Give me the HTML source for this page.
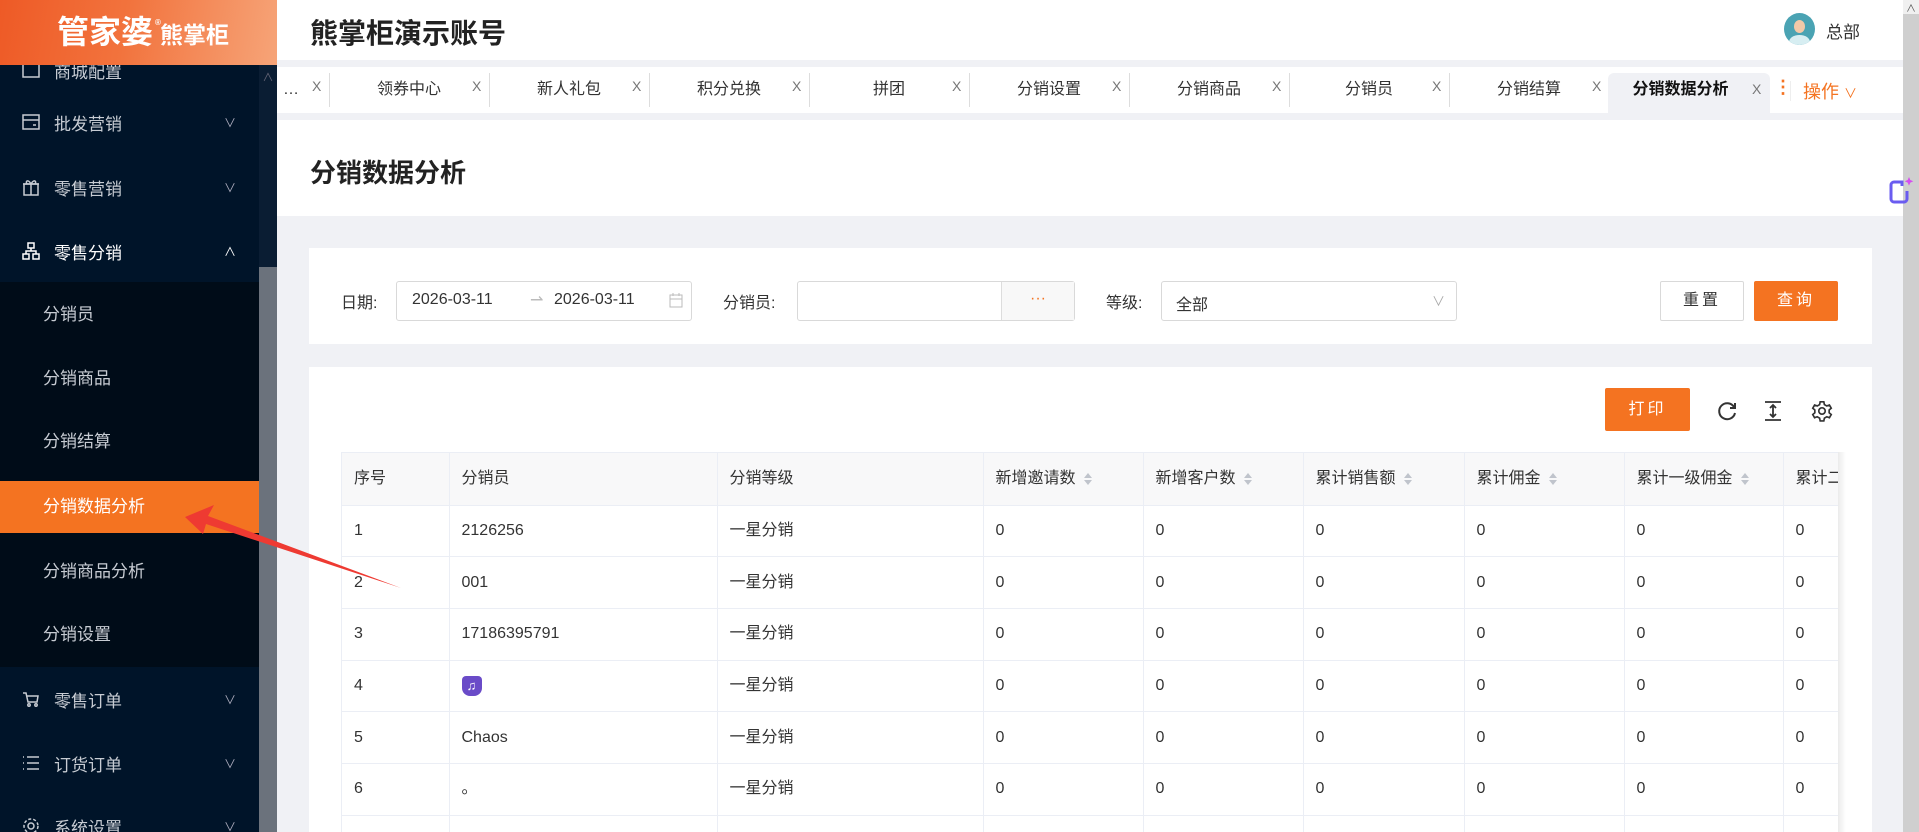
<!DOCTYPE html>
<html><head><meta charset="utf-8"><style>
*{margin:0;padding:0;box-sizing:border-box}
html,body{width:1919px;height:832px;overflow:hidden}
body{background:#f0f1f5;font-family:"Liberation Sans","Noto Sans CJK SC",sans-serif;position:relative;color:#333}
.abs{position:absolute}
#side{left:0;top:0;width:277px;height:832px;background:#001429}
#logo{left:0;top:0;width:277px;height:65px;background:linear-gradient(100deg,#ee5a26 0%,#f2733d 45%,#f6a478 100%);color:#fff;font-weight:bold;text-align:center;z-index:3}
.mi{position:absolute;left:0;width:259px;height:60px;color:#c7ccd3;font-size:17px;display:flex;align-items:center}
.mi .ic{position:absolute;left:22px;width:18px;height:18px}
.mi .tx{position:absolute;left:54px}
.mi .ch{position:absolute;left:224px;font-size:12px;color:#aab}
.sub{position:absolute;left:0;width:259px;height:52px;color:#c7ccd3;font-size:17px;line-height:52px;padding-left:43px}
.hdr{left:277px;top:0;width:1626px;height:60px;background:#fff}
.tabs{left:277px;top:67px;width:1626px;height:46px;background:#fff}
.tab{position:absolute;top:0;height:46px;width:160px;font-size:16px;color:#333;line-height:46px}
.tab .l{position:absolute;left:0;width:160px;text-align:center}
.tab .x{position:absolute;left:143px;color:#777;font-size:14px;top:-4px}
.tab .d{position:absolute;left:160px;top:6px;width:1px;height:34px;background:#ddd}
th,td{border-right:1px solid #ebeef5;border-bottom:1px solid #ebeef5;text-align:left;padding-left:12px;font-size:16px;font-weight:normal;color:#333;white-space:nowrap;overflow:hidden;line-height:20px;vertical-align:middle}
th{background:#f8f8f9;height:52px}
td{height:51.7px}
table{border-collapse:collapse;table-layout:fixed}
.sort{display:inline-block;vertical-align:middle;margin-left:8px;width:8px}
.sort:before{content:"";display:block;border:4px solid transparent;border-bottom:5px solid #c0c4cc;border-top:0;margin-bottom:2px}
.sort:after{content:"";display:block;border:4px solid transparent;border-top:5px solid #c0c4cc;border-bottom:0}
</style></head><body>
<div id="side" class="abs">
 <div class="mi" style="top:40px"><svg class="ic" viewBox="0 0 18 18" fill="none" stroke="#c7ccd3" stroke-width="1.5"><rect x="1" y="2" width="16" height="14"/></svg><span class="tx">商城配置</span></div>
 <div class="mi" style="top:92px"><svg class="ic" viewBox="0 0 18 18" fill="none" stroke="#c7ccd3" stroke-width="1.5"><rect x="1" y="2" width="16" height="14"/><path d="M1 7h16M11 12h3"/></svg><span class="tx">批发营销</span><span class="ch">∨</span></div>
 <div class="mi" style="top:157px"><svg class="ic" viewBox="0 0 18 18" fill="none" stroke="#c7ccd3" stroke-width="1.5"><rect x="2" y="6" width="14" height="11"/><path d="M1 6h16M9 6v11M9 6C6 1 3 3 5 6M9 6c3-5 6-3 4 0"/></svg><span class="tx">零售营销</span><span class="ch">∨</span></div>
 <div class="mi" style="top:221px;color:#fff"><svg class="ic" viewBox="0 0 18 18" fill="none" stroke="#fff" stroke-width="1.5"><rect x="6" y="1" width="6" height="5"/><rect x="1" y="12" width="6" height="5"/><rect x="11" y="12" width="6" height="5"/><path d="M9 6v3M4 12V9h10v3"/></svg><span class="tx">零售分销</span><span class="ch" style="color:#fff">∧</span></div>
 <div class="abs" style="left:0;top:282px;width:259px;height:385px;background:#000c18"></div>
 <div class="sub" style="top:289px">分销员</div>
 <div class="sub" style="top:353px">分销商品</div>
 <div class="sub" style="top:416px">分销结算</div>
 <div class="sub" style="top:481px;background:#f47321;color:#fff">分销数据分析</div>
 <div class="sub" style="top:546px">分销商品分析</div>
 <div class="sub" style="top:609px">分销设置</div>
 <div class="mi" style="top:669px"><svg class="ic" viewBox="0 0 18 18" fill="none" stroke="#c7ccd3" stroke-width="1.5"><path d="M1 3h3l2 9h9l1-6H5"/><circle cx="7" cy="15" r="1.2"/><circle cx="14" cy="15" r="1.2"/></svg><span class="tx">零售订单</span><span class="ch">∨</span></div>
 <div class="mi" style="top:733px"><svg class="ic" viewBox="0 0 18 18" fill="none" stroke="#c7ccd3" stroke-width="1.5"><path d="M5 3h12M5 9h12M5 15h12M1 3h1M1 9h1M1 15h1"/></svg><span class="tx">订货订单</span><span class="ch">∨</span></div>
 <div class="mi" style="top:796px"><svg class="ic" viewBox="0 0 18 18" fill="none" stroke="#c7ccd3" stroke-width="1.5"><circle cx="9" cy="9" r="3"/><circle cx="9" cy="9" r="7" stroke-dasharray="3 2"/></svg><span class="tx">系统设置</span><span class="ch">∨</span></div>
 <div class="abs" style="left:259px;top:65px;width:18px;height:767px;background:#0a1d33"><div style="color:#667;font-size:11px;text-align:center;margin-top:4px">∧</div></div>
 <div class="abs" style="left:259px;top:267px;width:18px;height:565px;background:#6b727c"></div>
</div>
<div id="logo" class="abs"><span style="position:absolute;left:57px;top:14px;font-size:32px;line-height:36px">管家婆</span><span style="position:absolute;left:155px;top:18px;font-size:8px">®</span><span style="position:absolute;left:160px;top:22px;font-size:23px;line-height:26px">熊掌柜</span></div>

<div class="hdr abs"><div class="abs" style="left:33px;top:12px;font-size:28px;font-weight:bold;color:#222">熊掌柜演示账号</div>
<div class="abs" style="left:1507px;top:13px;width:31px;height:32px;border-radius:50%;background:#4aa3b3;overflow:hidden"><div style="position:absolute;left:10px;top:7px;width:11px;height:13px;border-radius:50%;background:#f2c9a8"></div><div style="position:absolute;left:5px;top:22px;width:21px;height:14px;border-radius:50% 50% 0 0;background:#d7eef2"></div></div>
<div class="abs" style="left:1549px;top:18px;font-size:17px;color:#333">总部</div></div>

<div class="tabs abs">
 <div class="tab" style="left:-108px"><span class="l" style="left:0;width:130px;text-align:right">…</span><span class="x">X</span><span class="d"></span></div>
 <div class="tab" style="left:52px"><span class="l">领券中心</span><span class="x">X</span><span class="d"></span></div>
 <div class="tab" style="left:212px"><span class="l">新人礼包</span><span class="x">X</span><span class="d"></span></div>
 <div class="tab" style="left:372px"><span class="l">积分兑换</span><span class="x">X</span><span class="d"></span></div>
 <div class="tab" style="left:532px"><span class="l">拼团</span><span class="x">X</span><span class="d"></span></div>
 <div class="tab" style="left:692px"><span class="l">分销设置</span><span class="x">X</span><span class="d"></span></div>
 <div class="tab" style="left:852px"><span class="l">分销商品</span><span class="x">X</span><span class="d"></span></div>
 <div class="tab" style="left:1012px"><span class="l">分销员</span><span class="x">X</span><span class="d"></span></div>
 <div class="tab" style="left:1172px"><span class="l">分销结算</span><span class="x">X</span></div>
 <div class="tab" style="left:1331px;top:6px;height:40px;width:162px;background:#f0f1f5;border-radius:6px 6px 0 0;line-height:34px;font-weight:bold;color:#111"><span class="l" style="width:145px">分销数据分析</span><span class="x" style="left:144px;top:-1px;font-weight:normal">X</span></div>
 <div class="abs" style="left:1497px;top:10px;color:#f47321;font-size:18px;font-weight:bold">⋮</div>
 <div class="abs" style="left:1513px;top:14px;width:1px;height:20px;background:#eee"></div>
 <div class="abs" style="left:1526px;top:11px;color:#f47321;font-size:18px">操作 <span style="font-size:13px">∨</span></div>
</div>

<div class="abs" style="left:277px;top:120px;width:1626px;height:96px;background:#fff"><div class="abs" style="left:33px;top:33px;font-size:26px;font-weight:bold;color:#222">分销数据分析</div></div>

<div class="abs" style="left:309px;top:248px;width:1563px;height:96px;background:#fff;font-size:16px">
 <div class="abs" style="left:32px;top:41px">日期:</div>
 <div class="abs" style="left:87px;top:33px;width:296px;height:40px;border:1px solid #d9d9d9;border-radius:3px">
  <span class="abs" style="left:15px;top:9px">2026-03-11</span><span class="abs" style="left:133px;top:8px;color:#bbb">⇀</span><span class="abs" style="left:157px;top:9px">2026-03-11</span>
  <svg class="abs" style="left:272px;top:11px" width="14" height="15" viewBox="0 0 14 15" fill="none" stroke="#bbb"><rect x="1" y="2" width="12" height="12"/><path d="M1 6h12M4 0v3M10 0v3"/></svg></div>
 <div class="abs" style="left:414px;top:41px">分销员:</div>
 <div class="abs" style="left:488px;top:33px;width:278px;height:40px;border:1px solid #d9d9d9;border-radius:3px"><div class="abs" style="right:0;top:0;width:73px;height:38px;background:#f8f8f8;border-left:1px solid #ddd;color:#f47321;text-align:center;line-height:34px">···</div></div>
 <div class="abs" style="left:797px;top:41px">等级:</div>
 <div class="abs" style="left:852px;top:33px;width:296px;height:40px;border:1px solid #d9d9d9;border-radius:3px"><span class="abs" style="left:14px;top:9px">全部</span><span class="abs" style="left:270px;top:9px;color:#aaa;font-size:13px">∨</span></div>
 <div class="abs" style="left:1351px;top:33px;width:84px;height:40px;border:1px solid #d9d9d9;border-radius:2px;text-align:center;line-height:38px;letter-spacing:3px">重置</div>
 <div class="abs" style="left:1445px;top:33px;width:84px;height:40px;background:#f47321;color:#fff;border-radius:2px;text-align:center;line-height:40px;letter-spacing:3px">查询</div>
</div>

<div class="abs" style="left:309px;top:367px;width:1563px;height:465px;background:#fff">
 <div class="abs" style="left:1296px;top:21px;width:85px;height:43px;background:#f47321;color:#fff;border-radius:2px;text-align:center;line-height:43px;font-size:16px;letter-spacing:3px">打印</div>
 <svg class="abs" style="left:1407px;top:33px" width="22" height="22" viewBox="0 0 22 22" fill="none" stroke="#333" stroke-width="2"><path d="M18 7A8 8 0 1 0 19 13"/><path d="M19 3v5h-5"/></svg>
 <svg class="abs" style="left:1455px;top:33px" width="18" height="22" viewBox="0 0 18 22" fill="none" stroke="#333" stroke-width="1.8"><path d="M1 2h16M1 20h16M9 5v12M6 8l3-3 3 3M6 14l3 3 3-3"/></svg>
 <svg class="abs" style="left:1502px;top:33px" width="22" height="22" viewBox="0 0 24 24" fill="none" stroke="#333" stroke-width="1.8"><circle cx="12" cy="12" r="3.5"/><path d="M10 2h4l.6 3 2.6 1.5 2.9-1 2 3.4-2.3 2v3l2.3 2-2 3.4-2.9-1-2.6 1.5-.6 3h-4l-.6-3-2.6-1.5-2.9 1-2-3.4 2.3-2v-3l-2.3-2 2-3.4 2.9 1L9.4 5z"/></svg>
 <div class="abs" style="left:32px;top:85px;width:1497px;height:380px;overflow:hidden;border-top:1px solid #ebeef5;border-left:1px solid #ebeef5">
 <table style="width:1600px">
  <colgroup><col style="width:107px"><col style="width:268px"><col style="width:266px"><col style="width:160px"><col style="width:160px"><col style="width:161px"><col style="width:160px"><col style="width:159px"><col style="width:159px"></colgroup>
  <tr><th>序号</th><th>分销员</th><th>分销等级</th><th>新增邀请数<span class="sort"></span></th><th>新增客户数<span class="sort"></span></th><th>累计销售额<span class="sort"></span></th><th>累计佣金<span class="sort"></span></th><th>累计一级佣金<span class="sort"></span></th><th>累计二级佣金</th></tr>
  <tr><td>1</td><td>2126256</td><td>一星分销</td><td>0</td><td>0</td><td>0</td><td>0</td><td>0</td><td>0</td></tr>
  <tr><td>2</td><td>001</td><td>一星分销</td><td>0</td><td>0</td><td>0</td><td>0</td><td>0</td><td>0</td></tr>
  <tr><td>3</td><td>17186395791</td><td>一星分销</td><td>0</td><td>0</td><td>0</td><td>0</td><td>0</td><td>0</td></tr>
  <tr><td>4</td><td><span style="display:inline-block;width:20px;height:20px;background:#6a4bc8;border-radius:4px 4px 8px 8px;vertical-align:middle;color:#fff;font-size:13px;text-align:center;line-height:20px">♫</span></td><td>一星分销</td><td>0</td><td>0</td><td>0</td><td>0</td><td>0</td><td>0</td></tr>
  <tr><td>5</td><td>Chaos</td><td>一星分销</td><td>0</td><td>0</td><td>0</td><td>0</td><td>0</td><td>0</td></tr>
  <tr><td>6</td><td>。</td><td>一星分销</td><td>0</td><td>0</td><td>0</td><td>0</td><td>0</td><td>0</td></tr>
  <tr><td></td><td></td><td></td><td></td><td></td><td></td><td></td><td></td><td></td></tr>
 </table></div>
 <div class="abs" style="left:1529px;top:85px;width:8px;height:380px;background:linear-gradient(90deg,rgba(0,0,0,.08),rgba(0,0,0,0))"></div>
</div>

<div class="abs" style="left:1903px;top:0;width:16px;height:832px;background:#cfcfcf"><div style="position:absolute;top:0;width:16px;height:14px;background:#f0f0f0;color:#555;font-size:10px;text-align:center">∧</div></div>
<svg class="abs" style="left:1884px;top:174px" width="30" height="36" viewBox="0 0 30 36"><path d="M10 8h8v4M10 8a3 3 0 0 0-3 3v14a3 3 0 0 0 3 3h10a3 3 0 0 0 3-3v-8" fill="none" stroke="#6a5cf0" stroke-width="3"/><path d="M25 3l1.3 3 3 1.3-3 1.3-1.3 3-1.3-3-3-1.3 3-1.3z" fill="#d54ef0"/></svg>

<svg class="abs" style="left:0;top:0" width="500" height="650" viewBox="0 0 500 650"><path d="M401 588 L208 516 L214 505 L185 517 L203 534 L206 524 Z" fill="#ee3a32"/></svg>
</body></html>
